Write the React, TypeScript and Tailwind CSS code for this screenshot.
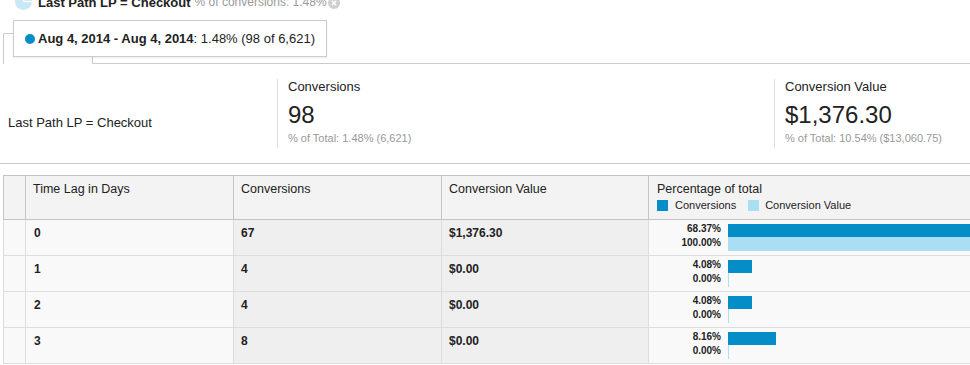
import React from "react";

const rows = [
  { d: "0", c: "67", v: "$1,376.30", cp: 68.37, vp: 100.0 },
  { d: "1", c: "4", v: "$0.00", cp: 4.08, vp: 0.0 },
  { d: "2", c: "4", v: "$0.00", cp: 4.08, vp: 0.0 },
  { d: "3", c: "8", v: "$0.00", cp: 8.16, vp: 0.0 },
];

const FULL = 588;

export default function App() {
  return (
    <div className="relative w-[970px] h-[365px] overflow-hidden bg-white font-['Liberation_Sans',Arial,sans-serif] text-[#222]">
      {/* Top area */}
      <div className="relative h-[64px] flex flex-col">
        <div className="flex items-center h-[15px] -mt-[5px] pl-[15px] leading-[15px] whitespace-nowrap">
          <svg width="17" height="17" viewBox="0 0 17 17" className="mr-[6px] -mt-[2px]">
            <circle cx="8.5" cy="8.5" r="8.5" fill="#c9e7f5" />
            <path d="M8.5 8.5 L17 8.5" stroke="#fff" strokeWidth="1.5" />
            <path d="M8.5 8.5 L8.5 0" stroke="#fff" strokeWidth="1.5" />
          </svg>
          <span className="text-[13px] font-bold">Last Path LP = Checkout</span>
          <span className="text-[12px] text-[#999] ml-[4px]">% of conversions: 1.48%</span>
          <svg width="12" height="12" viewBox="0 0 12 12" className="ml-[1px]">
            <circle cx="6" cy="6" r="6" fill="#cfcfcf" />
            <path d="M3.8 3.8 L8.2 8.2 M8.2 3.8 L3.8 8.2" stroke="#fff" strokeWidth="1.4" />
          </svg>
        </div>
        <div className="flex mt-[23px]">
          <div className="ml-[3px] w-[90px] h-[31px] border border-b-0 border-[#ccc] bg-white" />
          <div className="flex-1 h-[31px] border-b border-[#ccc]" />
        </div>
        <div className="absolute left-[13px] top-[20px] w-[314px] h-[37px] border border-[#ccc] bg-white shadow-[0_1px_2px_rgba(0,0,0,0.08)] flex items-center pl-[11px] whitespace-nowrap text-[13px]">
          <span className="w-[10px] h-[10px] rounded-full bg-[#058dc7] mr-[3px]" />
          <span className="font-bold">Aug 4, 2014 - Aug 4, 2014</span>
          <span>: 1.48% (98 of 6,621)</span>
        </div>
      </div>

      {/* Scorecards */}
      <div className="flex h-[100px] border-b border-[#ccc]">
        <div className="w-[277px] pl-[8px] pt-[51px] text-[13px] leading-[15px]">Last Path LP = Checkout</div>
        <div className="w-[497px] my-[15px] border-l border-[#ddd] pl-[10px]">
          <div className="text-[13px] leading-[15px]">Conversions</div>
          <div className="text-[24px] leading-[28px] mt-[7px] text-[#222]">98</div>
          <div className="text-[11px] leading-[13px] mt-[3px] text-[#999]">% of Total: 1.48% (6,621)</div>
        </div>
        <div className="flex-1 my-[15px] border-l border-[#ddd] pl-[10px]">
          <div className="text-[13px] leading-[15px]">Conversion Value</div>
          <div className="text-[24px] leading-[28px] mt-[7px] text-[#222]">$1,376.30</div>
          <div className="text-[11px] leading-[13px] mt-[3px] text-[#999]">% of Total: 10.54% ($13,060.75)</div>
        </div>
      </div>

      {/* Table */}
      <div className="ml-[3px] mt-[11px] w-[1100px]">
        <div className="grid grid-cols-[22px_208px_208px_207px_1fr] h-[45px] border-t border-b border-[#c4c4c4] bg-[#f3f3f3] text-[12.5px] leading-[15px]">
          <div className="border-l border-[#c4c4c4]" />
          <div className="border-l border-[#c4c4c4] pl-[7px] pt-[6px]">Time Lag in Days</div>
          <div className="border-l border-[#c4c4c4] pl-[7px] pt-[6px]">Conversions</div>
          <div className="border-l border-[#c4c4c4] pl-[7px] pt-[6px]">Conversion Value</div>
          <div className="border-l border-[#c4c4c4] pl-[8px] pt-[6px]">
            <div>Percentage of total</div>
            <div className="flex items-center mt-[2px] text-[11px] leading-[13px]">
              <span className="w-[11px] h-[11px] bg-[#058dc7] mr-[7px]" />
              <span>Conversions</span>
              <span className="w-[11px] h-[11px] bg-[#aadff3] ml-[12px] mr-[6px]" />
              <span>Conversion Value</span>
            </div>
          </div>
        </div>
        {rows.map((r) => (
          <div
            key={r.d}
            className="grid grid-cols-[22px_208px_208px_207px_1fr] h-[36px] border-b border-[#ddd] text-[12px] leading-[14px] font-bold"
          >
            <div className="border-l border-[#ddd] bg-[#f9f9f9]" />
            <div className="border-l border-[#ddd] bg-[#f9f9f9] pl-[8px] pt-[6px]">{r.d}</div>
            <div className="border-l border-[#ddd] bg-[#efefef] pl-[7px] pt-[6px]">{r.c}</div>
            <div className="border-l border-[#ddd] bg-[#efefef] pl-[7px] pt-[6px]">{r.v}</div>
            <div className="border-l border-[#ddd] bg-[#f9f9f9] flex pt-[2px]">
              <div className="w-[72px] text-right text-[10px] leading-[14px]">
                <div>{r.cp.toFixed(2)}%</div>
                <div>{r.vp.toFixed(2)}%</div>
              </div>
              <div className="ml-[7px] pt-[2px]">
                <div className="h-[13px] bg-[#058dc7]" style={{ width: Math.max(1, (r.cp / 100) * FULL) }} />
                <div className="h-[14px] bg-[#aadff3]" style={{ width: Math.max(1, (r.vp / 100) * FULL) }} />
              </div>
            </div>
          </div>
        ))}
      </div>
    </div>
  );
}
